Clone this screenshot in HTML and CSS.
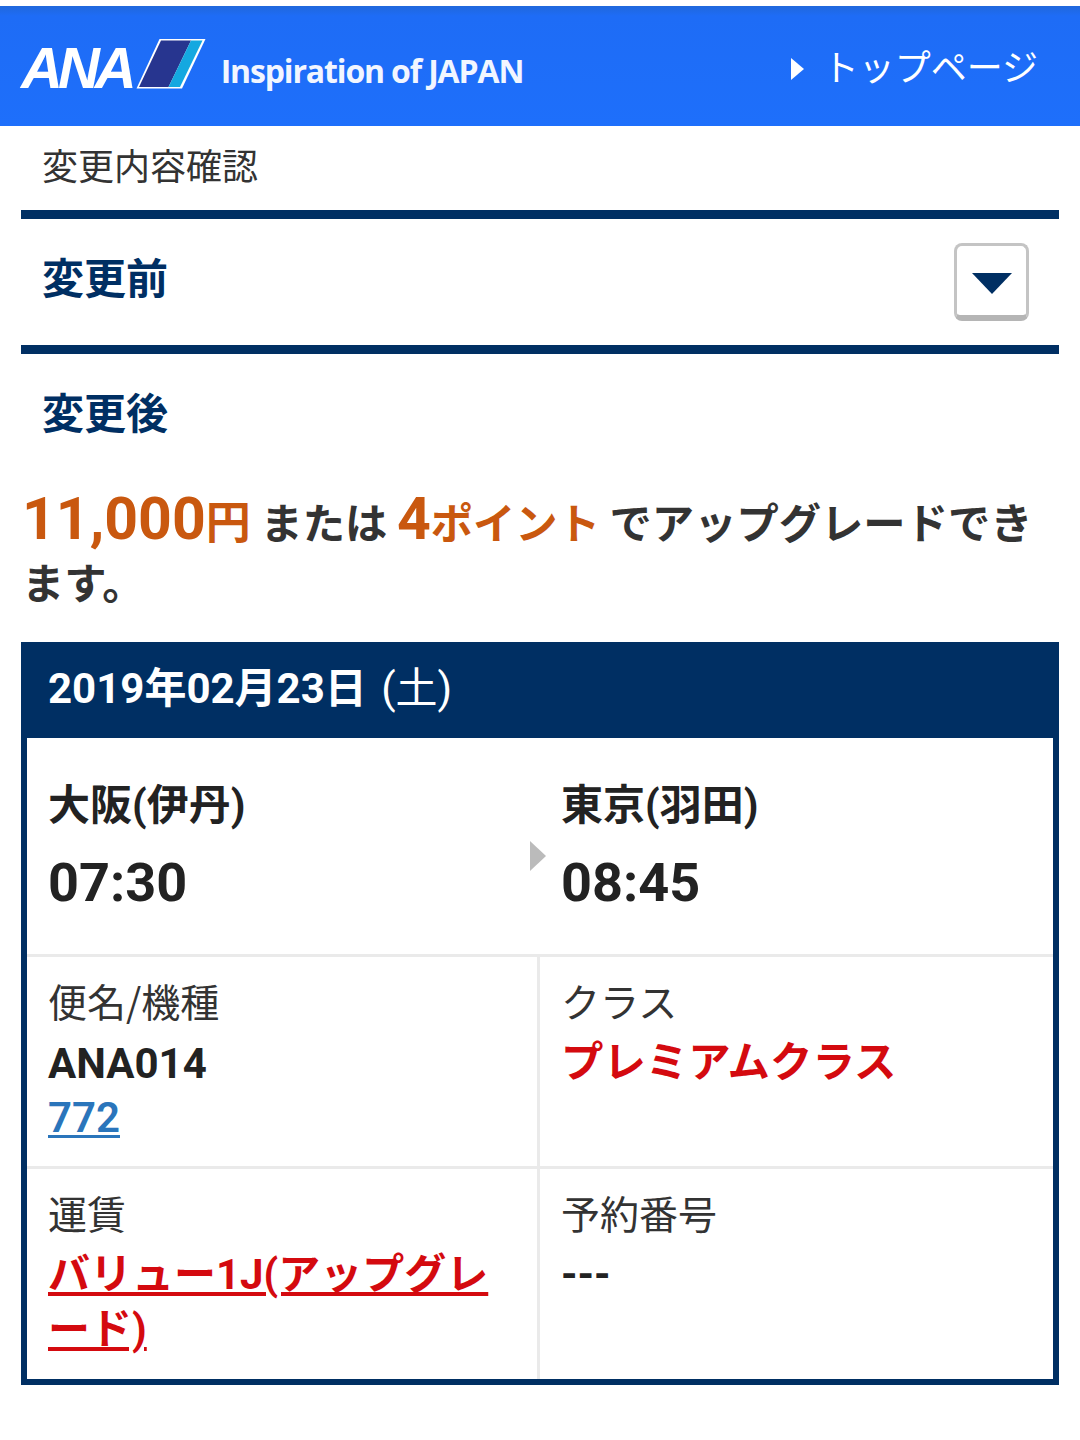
FILE: index.html
```html
<!DOCTYPE html>
<html lang="ja">
<head>
<meta charset="utf-8">
<title>変更内容確認</title>
<link rel="stylesheet" href="styles.css">
</head>
<body>
<header class="topbar">
  <div class="brand">
    <span class="ana">ANA</span>
    <svg class="wing" viewBox="0 0 72 52" width="72" height="52" aria-hidden="true">
      <polygon points="24.5,1 70.5,1 47,50.5 1.5,50.5" fill="#fff"/>
      <polygon points="26,2.5 56,2.5 33.5,49 4,49" fill="#27358f"/>
      <polygon points="56,2.5 67.5,2.5 45,49 33.5,49" fill="#14a8e0"/>
    </svg>
    <span class="tagline">Inspiration of JAPAN</span>
  </div>
  <a class="toplink"><span class="toparrow"></span>トップページ</a>
</header>
<main class="page">
  <h1 class="title">変更内容確認</h1>
  <section class="band band-before">
    <h2 class="heading">変更前</h2>
    <div class="toggle"><span class="toggle-arrow"></span></div>
  </section>
  <section class="band band-after">
    <h2 class="heading">変更後</h2>
  </section>
  <p class="upgrade"><span class="orange"><span class="big">11,000</span><span class="yen">円</span></span> または <span class="orange"><span class="big">4</span>ポイント</span> でアップグレードでき<br>ます。</p>
  <section class="card">
    <div class="card-head">2019年02月23日 <span class="dow">(土)</span></div>
    <div class="route">
      <div class="stop">
        <div class="place">大阪(伊丹)</div>
        <div class="time">07:30</div>
      </div>
      <span class="route-arrow"></span>
      <div class="stop">
        <div class="place">東京(羽田)</div>
        <div class="time">08:45</div>
      </div>
    </div>
    <div class="grid">
      <div class="cell row-1">
        <div class="label">便名/機種</div>
        <div class="value flight">ANA014</div>
        <a class="value link-blue">772</a>
      </div>
      <div class="cell row-1 right">
        <div class="label">クラス</div>
        <div class="value red">プレミアムクラス</div>
      </div>
      <div class="cell row-2">
        <div class="label">運賃</div>
        <a class="value red link-red">バリュー1J(アップグレード)</a>
      </div>
      <div class="cell row-2 right">
        <div class="label">予約番号</div>
        <div class="value">---</div>
      </div>
    </div>
  </section>
</main>
</body>
</html>
```
FILE: styles.css
```css
* { box-sizing: border-box; }
html, body { margin: 0; padding: 0; background: #fff; }
body {
  font-family: Roboto, "Noto Sans CJK JP", sans-serif;
  color: #222;
  width: 1080px;
  height: 1440px;
  overflow: hidden;
  padding-top: 6px;
}
.topbar {
  height: 120px;
  background: linear-gradient(#2068dc 0, #1e6cf6 10px, #1e6ffb 100%);
  display: flex;
  align-items: center;
  justify-content: space-between;
  padding: 0 42px 0 21px;
}
.brand { display: flex; align-items: center; }
.ana {
  font-family: "Liberation Sans", sans-serif;
  font-weight: 700;
  font-style: italic;
  font-size: 58px;
  letter-spacing: -5px;
  color: #fff;
  line-height: 1;
  margin-top: 4px;
}
.wing { margin: -4px 0 0 3px; }
.tagline {
  font-family: "Open Sans", sans-serif;
  font-weight: 700;
  font-size: 32px;
  letter-spacing: -1.15px;
  color: #f2f6ff;
  margin: 8px 0 0 14px;
}
.toplink {
  display: flex;
  align-items: center;
  color: #fff;
  font-family: "Noto Sans CJK JP", sans-serif;
  font-size: 36px;
  line-height: 1;
  margin-top: -2px;
}
.toparrow {
  width: 0; height: 0;
  border-left: 13px solid #fff;
  border-top: 11px solid transparent;
  border-bottom: 11px solid transparent;
  margin: 8px 19px 0 0;
}
.page { padding: 0 21px; }
.title {
  margin: 0;
  font-family: "Noto Sans CJK JP", sans-serif;
  font-weight: 400;
  font-size: 36px;
  line-height: 76px;
  height: 84px;
  padding-left: 21px;
  color: #333;
}
.band { border-top: 9px solid #002f63; }
.band-before {
  height: 135px;
  display: flex;
  align-items: flex-start;
  justify-content: space-between;
  padding: 21px 30px 0 21px;
}
.band-after { height: 110px; padding: 21px 21px 0; }
.heading {
  margin: 0;
  font-family: "Noto Sans CJK JP", sans-serif;
  font-weight: 700;
  font-size: 42px;
  line-height: 72px;
  color: #002f63;
}
.toggle {
  width: 75px;
  height: 78px;
  margin-top: 3px;
  border: 3px solid #c4c4c4;
  border-bottom: 6px solid #b5b5b5;
  border-radius: 8px;
  background: #fff;
  display: flex;
  align-items: center;
  justify-content: center;
  padding-top: 5px;
}
.toggle-arrow {
  width: 0; height: 0;
  border-top: 21px solid #002f63;
  border-left: 20px solid transparent;
  border-right: 20px solid transparent;
}
.upgrade {
  margin: 0;
  padding: 34px 0 0 1px;
  height: 187px;
  font-family: "Noto Sans CJK JP", sans-serif;
  font-weight: 700;
  font-size: 42.3px;
  line-height: 60px;
  color: #333;
}
.orange { color: #c9580f; }
.big { font-family: Roboto, sans-serif; font-size: 59px; font-weight: 700; }
.yen { font-size: 45px; }
.card { border: 6px solid #002f63; height: 743px; }
.card-head {
  height: 90px;
  background: #002f63;
  color: #fff;
  font-family: Roboto, "Noto Sans CJK JP", sans-serif;
  font-weight: 700;
  font-size: 42px;
  line-height: 82px;
  padding-left: 21px;
}
.dow { font-weight: 400; margin-left: 4px; }
.route {
  height: 219px;
  display: grid;
  grid-template-columns: 1fr 1fr;
  position: relative;
  border-bottom: 3px solid #eaeaea;
}
.stop { padding: 38px 21px 0; }
.place {
  font-weight: 700;
  font-size: 42px;
  line-height: 60px;
}
.time {
  font-weight: 700;
  font-size: 54px;
  line-height: 64px;
  margin-top: 15px;
}
.route-arrow {
  position: absolute;
  left: 503px;
  top: 103px;
  width: 0; height: 0;
  border-left: 16px solid #bbb;
  border-top: 15px solid transparent;
  border-bottom: 15px solid transparent;
}
.grid { display: grid; grid-template-columns: 510px 1fr; }
.cell { padding: 15px 21px 0; }
.row-1 { height: 212px; border-bottom: 3px solid #eaeaea; }
.row-2 { height: 210px; }
.right { border-left: 3px solid #eaeaea; }
.label {
  font-family: "Noto Sans CJK JP", sans-serif;
  font-size: 39px;
  line-height: 56px;
  color: #333;
}
.value {
  display: block;
  font-family: Roboto, "Noto Sans CJK JP", sans-serif;
  font-weight: 700;
  font-size: 42px;
  line-height: 56px;
  margin-top: 7px;
}
.flight { margin-top: 8px; }
.link-blue {
  margin-top: -2px;
  font-weight: 600;
  color: #2a75bb;
  text-decoration: underline;
  text-decoration-thickness: 3px;
  text-underline-offset: 3px;
}
.red { color: #d40a0f; font-size: 42.4px; }
.link-red {
  font-size: 42px;
  line-height: 55px;
  text-decoration: underline;
  text-decoration-thickness: 4px;
  text-underline-offset: 3px;
}
```
